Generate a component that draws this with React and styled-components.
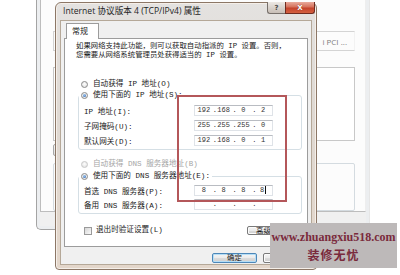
import React from 'react';
import styled, { createGlobalStyle } from 'styled-components';

const CJK = `"Liberation Mono", "Noto Sans CJK SC", monospace`;
const UI = `"Open Sans", "Noto Sans CJK SC", sans-serif`;

const GlobalStyle = createGlobalStyle`
  html, body { margin: 0; padding: 0; background: #ffffff; }
  body { width: 400px; height: 275px; overflow: hidden; }
  #root { width: 400px; height: 275px; }
`;

const Desktop = styled.div`
  position: relative;
  width: 400px;
  height: 275px;
  overflow: hidden;
  background: #ffffff;
  font-family: ${CJK};
  font-size: 7.6px;
  color: #1a1a1a;
`;

/* ---------- window behind ---------- */
const BackWindow = styled.div`
  position: absolute;
  left: 36px;
  top: -14px;
  width: 334px;
  height: 244px;
  box-sizing: border-box;
  border: 1px solid #a4a4a4;
  border-right-color: #e6e6e6;
  border-top: none;
  border-radius: 0 0 5px 5px;
  background: #eceef0;
  padding: 0 3px 3px;
  display: flex;
  flex-direction: column;
`;
const BackPanel = styled.div`
  flex: 1;
  background: #fcfcfc;
  border: 1px solid #bdbdbd;
  border-right-color: #eeeeee;
  padding: 44px 10px 0 12px;
  display: flex;
  flex-direction: column;
`;
const AdapterBox = styled.div`
  height: 20px;
  box-sizing: border-box;
  border: 1px solid #d4d4d4;
  border-right-color: #f2f2f2;
  display: flex;
  align-items: center;
  justify-content: flex-end;
  padding-right: 7px;
  font-family: ${UI};
  font-size: 8px;
  color: #7c7c7c;
`;
const BackList = styled.div`
  height: 72px;
  margin-top: 16px;
  border: 1px solid #c8c8c8;
  background: #fff;
`;
const BackButton = styled.div`
  width: 40px;
  height: 10px;
  margin-top: 3px;
  border: 1px solid #a8a8a8;
  border-radius: 2px;
  background: linear-gradient(#f6f6f6, #e2e2e2);
`;
const BackGroup = styled.div`
  height: 46px;
  margin-top: 7px;
  border: 1px solid #d4dbe0;
  border-radius: 2px;
`;
const BackFooter = styled.div`
  height: 16px;
  background: #f0f0f0;
`;

/* ---------- dialog ---------- */
const Dialog = styled.div`
  position: absolute;
  left: 55px;
  top: 2px;
  width: 262px;
  height: 268px;
  box-sizing: border-box;
  border: 1px solid #8c7766;
  border-radius: 6px 6px 4px 4px;
  background: linear-gradient(180deg, #e4e2e0 0%, #dfd9d3 40%, #e3d6ca 100%);
  box-shadow: inset 0 0 0 1px #f5efe9;
  padding: 0 4px 4px;
  display: flex;
  flex-direction: column;
`;
const TitleBar = styled.div`
  height: 17px;
  display: flex;
  align-items: flex-start;
`;
const Title = styled.div`
  font-family: ${UI};
  font-size: 8.6px;
  line-height: 17px;
  padding-left: 3px;
  color: #1e1e1e;
  white-space: nowrap;
`;
const Caption = styled.div`
  margin-left: auto;
  margin-right: -3px;
  margin-top: -1px;
  display: flex;
`;
const CapButton = styled.div`
  box-sizing: border-box;
  height: 12px;
  width: ${p => p.$w}px;
  border: 1px solid ${p => (p.$close ? '#6f2b1f' : '#77706b')};
  border-top: none;
  ${p => (p.$close ? '' : 'border-right: none;')}
  border-radius: ${p => (p.$close ? '0 0 3px 0' : '0 0 0 3px')};
  background: ${p =>
    p.$close
      ? 'linear-gradient(180deg, #e8aa9c 0%, #d6715b 45%, #c4432c 55%, #d4603f 100%)'
      : 'linear-gradient(180deg, #ece8e4 0%, #d9d2cc 50%, #c8beb6 100%)'};
  display: flex;
  align-items: center;
  justify-content: center;
  font-family: "DejaVu Sans", sans-serif;
  font-weight: bold;
  font-size: 7px;
  color: ${p => (p.$close ? '#ffffff' : '#4a4a4a')};
  text-shadow: ${p => (p.$close ? '0 0 1px #6a1a10' : 'none')};
`;
const Body = styled.div`
  flex: 1;
  background: #f0f0f0;
  border: 1px solid #b5a898;
  padding: 2px 3px 0;
  display: flex;
  flex-direction: column;
`;
const TabStrip = styled.div`
  display: flex;
  height: 16px;
  margin-bottom: -1px;
  position: relative;
  z-index: 1;
`;
const Tab = styled.div`
  margin-left: 2px;
  width: 33px;
  box-sizing: border-box;
  border: 1px solid #9c9c9c;
  border-bottom: none;
  background: #ffffff;
  font-size: 8px;
  line-height: 15px;
  padding-left: 5px;
  color: #222;
`;
const Panel = styled.div`
  height: 209px;
  box-sizing: border-box;
  border: 1px solid #9c9c9c;
  background: #ffffff;
  display: flex;
  flex-direction: column;
`;
const Paragraph = styled.p`
  margin: 0;
  padding: 3px 11px 0;
  font-size: 7.4px;
  line-height: 8.6px;
  white-space: nowrap;
`;
const Section = styled.div`
  padding-left: 16px;
  margin-top: ${p => p.$mt || 0}px;
`;
const RadioRow = styled.div`
  display: flex;
  align-items: center;
  gap: 5px;
  height: 9px;
  line-height: 9px;
  white-space: nowrap;
  color: ${p => (p.$disabled ? '#a6a6a6' : '#1a1a1a')};
`;
const Radio = styled.span`
  width: 7px;
  height: 7px;
  box-sizing: border-box;
  border-radius: 50%;
  border: 1px solid ${p => (p.$disabled ? '#c8c8c8' : '#8a8a8a')};
  background: radial-gradient(circle at 50% 40%, #ffffff 0%, #e6e6e6 70%, #d2d2d2 100%);
  display: inline-flex;
  align-items: center;
  justify-content: center;
  flex: none;
  &::after {
    content: '';
    width: 3px;
    height: 3px;
    border-radius: 50%;
    background: ${p => (p.$checked ? 'radial-gradient(circle at 40% 35%, #a4cdf2, #1f55a8)' : 'transparent')};
  }
`;
const Group = styled.fieldset`
  margin: ${p => p.$mt}px 0 0 -3px;
  width: 224px;
  box-sizing: border-box;
  min-width: 0;
  border: 1px solid #d5dfe5;
  border-radius: 3px;
  padding: ${p => p.$pt}px 0 3px 0;
  display: flex;
  flex-direction: column;
  gap: ${p => p.$gap}px;
`;
const Legend = styled.legend`
  padding: 0 2px;
  margin-left: 0;
`;
const FieldRow = styled.div`
  display: grid;
  grid-template-columns: 110px 79px;
  align-items: center;
  margin-left: 5px;
  height: 11px;
  white-space: nowrap;
`;
const IpBox = styled.div`
  width: 79px;
  height: 11px;
  box-sizing: border-box;
  border: 1px solid #dfe3e8;
  border-top-color: #b9bcc2;
  display: grid;
  grid-template-columns: 1fr 2px 1fr 2px 1fr 2px 1fr;
  align-items: center;
  font-size: 7px;
  line-height: 9px;
  color: #333;
`;
const Octet = styled.span`
  text-align: center;
`;
const Dot = styled.span`
  text-align: center;
`;
const Caret = styled.span`
  display: inline-block;
  width: 1px;
  height: 8px;
  background: #111;
  vertical-align: middle;
  margin-left: 1px;
`;
const BottomRow = styled.div`
  display: flex;
  align-items: center;
  justify-content: space-between;
  margin: 12px 0 0 19px;
  width: 218px;
  height: 9px;
`;
const CheckLabel = styled.div`
  display: flex;
  align-items: center;
  gap: 4px;
  white-space: nowrap;
  line-height: 9px;
`;
const Checkbox = styled.span`
  width: 8px;
  height: 8px;
  box-sizing: border-box;
  border: 1px solid #9a9a9a;
  background: linear-gradient(135deg, #d6d6d6, #fafafa);
  flex: none;
`;
const Button = styled.div`
  box-sizing: border-box;
  width: ${p => p.$w}px;
  height: ${p => p.$h}px;
  border: 1px solid ${p => (p.$default ? '#4d87b8' : '#7a7a7a')};
  border-radius: 2px;
  background: linear-gradient(180deg, #f4f4f4 0%, #ebebeb 50%, #dcdcdc 51%, #cfcfcf 100%);
  box-shadow: ${p => (p.$default ? 'inset 0 0 0 1px #b6def6' : 'inset 0 0 0 1px #fbfbfb')};
  display: flex;
  align-items: center;
  justify-content: ${p => (p.$start ? 'flex-start' : 'center')};
  padding-left: ${p => (p.$start ? 8 : 0)}px;
  font-size: 7.4px;
  line-height: 8px;
  color: #1a1a1a;
  white-space: nowrap;
`;
const Footer = styled.div`
  display: flex;
  justify-content: flex-end;
  gap: 6px;
  padding-top: 6px;
`;

/* ---------- overlays ---------- */
const Annotation = styled.div`
  position: absolute;
  left: 177px;
  top: 95px;
  width: 110px;
  height: 107px;
  box-sizing: border-box;
  border: 2px solid #b4575a;
`;
const Watermark = styled.div`
  position: absolute;
  left: 270px;
  top: 223px;
  width: 127px;
  height: 45px;
  background: #bdb9b9;
  display: flex;
  flex-direction: column;
  align-items: center;
  padding-top: 8px;
  box-sizing: border-box;
  color: #7a2a3c;
`;
const WmUrl = styled.div`
  font-family: "Liberation Serif", serif;
  font-weight: bold;
  font-size: 12px;
  line-height: 13px;
  white-space: nowrap;
`;
const WmName = styled.div`
  font-family: "Noto Sans CJK SC", sans-serif;
  font-weight: bold;
  font-size: 12px;
  letter-spacing: 1px;
  line-height: 15px;
  margin-top: 3px;
`;

const Ip = ({ parts, caret }) => (
  <IpBox>
    <Octet>{parts[0]}</Octet>
    <Dot>.</Dot>
    <Octet>{parts[1]}</Octet>
    <Dot>.</Dot>
    <Octet>{parts[2]}</Octet>
    <Dot>.</Dot>
    <Octet>
      {parts[3]}
      {caret && <Caret />}
    </Octet>
  </IpBox>
);

export default function App() {
  return (
    <Desktop>
      <GlobalStyle />
      <BackWindow>
        <BackPanel>
          <AdapterBox>i PCI ...</AdapterBox>
          <BackList />
          <BackButton />
          <BackGroup />
        </BackPanel>
        <BackFooter />
      </BackWindow>

      <Dialog>
        <TitleBar>
          <Title>Internet 协议版本 4 (TCP/IPv4) 属性</Title>
          <Caption>
            <CapButton $w={18}>?</CapButton>
            <CapButton $w={30} $close>X</CapButton>
          </Caption>
        </TitleBar>
        <Body>
          <TabStrip>
            <Tab>常规</Tab>
          </TabStrip>
          <Panel>
            <Paragraph>
              如果网络支持此功能，则可以获取自动指派的 IP 设置。否则，
              <br />
              您需要从网络系统管理员处获得适当的 IP 设置。
            </Paragraph>
            <Section $mt={21}>
              <RadioRow>
                <Radio />
                自动获得 IP 地址(O)
              </RadioRow>
              <Group $mt={2} $pt={5} $gap={4}>
                <Legend>
                  <RadioRow>
                    <Radio $checked />
                    使用下面的 IP 地址(S):
                  </RadioRow>
                </Legend>
                <FieldRow>
                  <span>IP 地址(I):</span>
                  <Ip parts={['192', '168', '0', '2']} />
                </FieldRow>
                <FieldRow>
                  <span>子网掩码(U):</span>
                  <Ip parts={['255', '255', '255', '0']} />
                </FieldRow>
                <FieldRow>
                  <span>默认网关(D):</span>
                  <Ip parts={['192', '168', '0', '1']} />
                </FieldRow>
              </Group>
            </Section>
            <Section $mt={10}>
              <RadioRow $disabled>
                <Radio $disabled />
                自动获得 DNS 服务器地址(B)
              </RadioRow>
              <Group $mt={3} $pt={4} $gap={3}>
                <Legend>
                  <RadioRow>
                    <Radio $checked />
                    使用下面的 DNS 服务器地址(E):
                  </RadioRow>
                </Legend>
                <FieldRow>
                  <span>首选 DNS 服务器(P):</span>
                  <Ip parts={['8', '8', '8', '8']} caret />
                </FieldRow>
                <FieldRow>
                  <span>备用 DNS 服务器(A):</span>
                  <Ip parts={['', '', '', '']} />
                </FieldRow>
              </Group>
            </Section>
            <BottomRow>
              <CheckLabel>
                <Checkbox />
                退出时验证设置(L)
              </CheckLabel>
              <Button $w={55} $h={9} $start>高级</Button>
            </BottomRow>
          </Panel>
          <Footer>
            <Button $w={45} $h={10} $default>确定</Button>
            <Button $w={45} $h={10}>取消</Button>
          </Footer>
        </Body>
      </Dialog>

      <Annotation />
      <Watermark>
        <WmUrl>www.zhuangxiu518.com</WmUrl>
        <WmName>装修无忧</WmName>
      </Watermark>
    </Desktop>
  );
}
